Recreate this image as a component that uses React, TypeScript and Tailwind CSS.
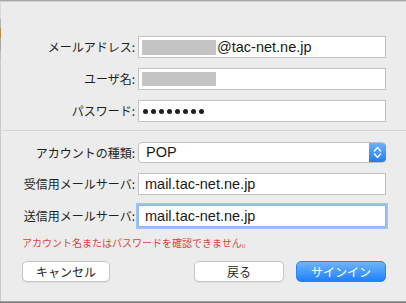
import React from "react";

const JP = "font-['Noto_Sans_CJK_JP','Noto_Sans',sans-serif]";
const LAT = "font-['Liberation_Sans','Noto_Sans_CJK_JP',sans-serif]";

function Row({ label, children, className = "" }: { label: string; children: React.ReactNode; className?: string }) {
  return (
    <div className={`flex items-center h-[22px] ${className}`}>
      <div className={`w-[134px] text-right text-[12px] leading-none text-[#1f1f1f] ${JP}`}>{label}</div>
      <div className="ml-[3px] w-[248px] h-full">{children}</div>
    </div>
  );
}

function Stepper() {
  return (
    <div className="w-[17px] h-full rounded-r-[4px] bg-gradient-to-b from-[#6db2ff] to-[#1b7cf6] flex items-center justify-center -mr-px -my-px h-[21px]">
      <svg width="17" height="21" viewBox="0 0 17 21">
        <polyline points="5.5,9 8.5,5.5 11.5,9" fill="none" stroke="white" strokeWidth="1.4" strokeLinecap="round" strokeLinejoin="round" />
        <polyline points="5.5,12 8.5,15.5 11.5,12" fill="none" stroke="white" strokeWidth="1.4" strokeLinecap="round" strokeLinejoin="round" />
      </svg>
    </div>
  );
}

export default function App() {
  return (
    <div className="w-[406px] h-[303px] bg-[#ececec] flex flex-col overflow-hidden">
      <div className="h-px bg-[#a6a6a6]" />
      <div className="h-px bg-[#d2d2d2]" />
      <div className="flex-1 flex">
        <div className="w-px flex flex-col">
          <div className="h-[17px] bg-[#d9d9d9]" />
          <div className="h-[9px] bg-[#b3b3b3]" />
          <div className="h-[10px] bg-[#c08a42]" />
          <div className="h-[12px] bg-[#a9a9a9]" />
          <div className="h-[8px] bg-[#bcbcbc]" />
          <div className="flex-1 bg-[#c9c9c9]" />
        </div>
        <div className="flex-1 flex flex-col pt-[34px]">
          <Row label="メールアドレス:">
            <div className="h-full border border-[#c2c2c2] bg-white flex items-center pl-[3px]">
              <div className="w-[74px] h-[15px] bg-[#c4c4c4]" />
              <span className={`ml-px text-[14.5px] leading-none text-[#1a1a1a] ${LAT}`}>@tac-net.ne.jp</span>
            </div>
          </Row>
          <Row label="ユーザ名:" className="mt-[10px]">
            <div className="h-full border border-[#c2c2c2] bg-white flex items-center pl-[3px]">
              <div className="w-[74px] h-[14px] bg-[#c4c4c4]" />
            </div>
          </Row>
          <Row label="パスワード:" className="mt-[10px]">
            <div className="h-full border border-[#c2c2c2] bg-white flex items-center pl-[4px] gap-[3px]">
              {Array.from({ length: 8 }).map((_, i) => (
                <span key={i} className="w-[5px] h-[5px] rounded-full bg-[#1e1e1e]" />
              ))}
            </div>
          </Row>
          <div className="mt-[8px] -ml-px h-px bg-[#d6d6d6]" />
          <Row label="アカウントの種類:" className="mt-[11px] !h-[21px]">
            <div className="h-full border border-[#c2c2c2] bg-white rounded-[4px] flex items-center">
              <span className={`flex-1 pl-[7px] text-[14.5px] leading-none text-[#1a1a1a] ${LAT}`}>POP</span>
              <Stepper />
            </div>
          </Row>
          <Row label="受信用メールサーバ:" className="mt-[10px]">
            <div className="h-full border border-[#c2c2c2] bg-white flex items-center pl-[6px]">
              <span className={`text-[14.5px] leading-none text-[#1a1a1a] ${LAT}`}>mail.tac-net.ne.jp</span>
            </div>
          </Row>
          <Row label="送信用メールサーバ:" className="mt-[10px]">
            <div className="h-full border border-[#8fb5e8] bg-white flex items-center pl-[6px] shadow-[0_0_0_2px_#9ec3f0]">
              <span className={`text-[14.5px] leading-none text-[#1a1a1a] ${LAT}`}>mail.tac-net.ne.jp</span>
            </div>
          </Row>
          <div className={`mt-[9px] pl-[21px] h-[14px] leading-[14px] text-[10px] text-[#e0413b] ${JP}`}>
            アカウント名またはパスワードを確認できません。
          </div>
          <div className="mt-[11px] flex pl-[21px] h-[21px]">
            <button className={`w-[88px] h-full rounded-[5px] bg-white border border-[#c6c6c6] shadow-[0_1px_0_rgba(0,0,0,0.06)] text-[12px] leading-none text-[#1f1f1f] ${JP}`}>
              キャンセル
            </button>
            <button className={`ml-[84px] w-[90px] h-full rounded-[5px] bg-white border border-[#c6c6c6] shadow-[0_1px_0_rgba(0,0,0,0.06)] text-[12px] leading-none text-[#1f1f1f] ${JP}`}>
              戻る
            </button>
            <button className={`ml-[12px] w-[90px] h-full rounded-[5px] bg-gradient-to-b from-[#6cb4fb] to-[#1a80fb] border border-[#2d84ec] text-[12px] leading-none text-white ${JP}`}>
              サインイン
            </button>
          </div>
        </div>
      </div>
      <div className="h-px bg-[#a0a0a0]" />
      <div className="h-px bg-[#7f7f7f]" />
    </div>
  );
}
